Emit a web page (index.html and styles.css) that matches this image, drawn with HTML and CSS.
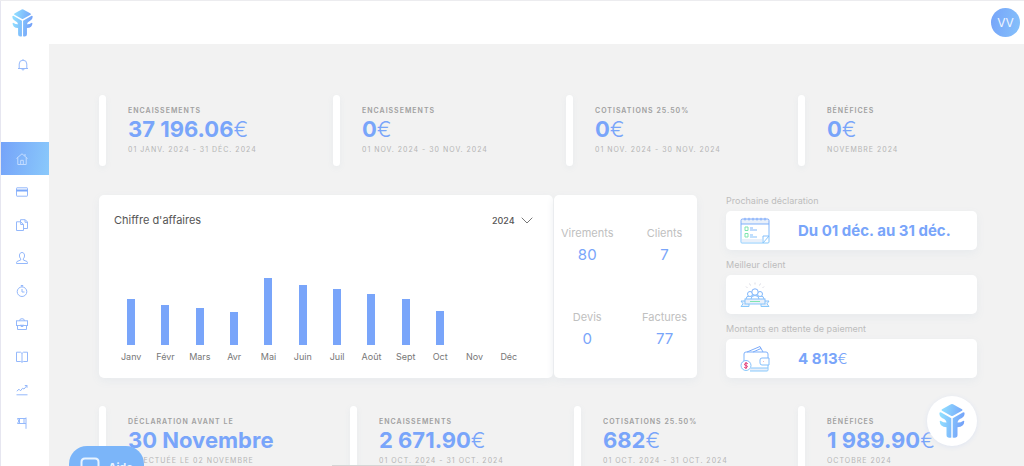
FILE: index.html
```html
<!DOCTYPE html>
<html lang="fr">
<head>
<meta charset="utf-8">
<meta name="viewport" content="width=device-width, initial-scale=1">
<title>Tableau de bord</title>
<link rel="stylesheet" href="styles.css">
</head>
<body>
<svg class="defs" width="0" height="0" aria-hidden="true">
  <defs>
    <linearGradient id="brand" gradientUnits="userSpaceOnUse" x1="2" y1="14" x2="24" y2="18"><stop offset="0" stop-color="#8fdcff"/><stop offset="1" stop-color="#75a3f9"/></linearGradient>
    <linearGradient id="line" gradientUnits="userSpaceOnUse" x1="0" y1="0" x2="0" y2="28"><stop offset="0" stop-color="#79a6fa"/><stop offset="1" stop-color="#8accfc"/></linearGradient>
    <symbol id="logo" viewBox="0 0 26 34">
      <g fill="url(#brand)">
        <path d="M12 .3Q13 -.2 14 .3L23 5.200Q24 6 23 6.700L14 11.700Q13 12.200 12 11.700L3 6.700Q2 6 3 5.200Z"/>
        <path d="M.5 8.700Q1 7.800 2.200 8.400L12.300 14.200V33.500Q7.500 34.500 7.500 31V23.300Q.8 22.800 .7 17.200Q.9 16.300 2 16.900Q4.500 18.700 7.500 18.500Q7.200 15.700 3.500 14.200Q0 12.500 .5 8.700Z"/>
        <path d="M25.500 8.700Q25 7.800 23.800 8.400L13.700 14.200V33.500Q18.500 34.500 18.500 31V23.300Q25.200 22.800 25.300 17.200Q25.100 16.300 24 16.900Q21.500 18.700 18.500 18.500Q18.800 15.700 22.500 14.200Q26 12.500 25.500 8.700Z"/>
      </g>
    </symbol>
  </defs>
</svg>

<div class="app">
  <aside class="sidebar">
    <a class="brand" href="#" aria-label="Accueil"><svg class="logo"><use href="#logo"/></svg></a>
    <button class="bell" type="button" aria-label="Notifications">
      <svg class="icon" viewBox="0 0 12 12"><path d="M1 9.500H11M2.200 9.500V5A3.800 3.800 0 0 1 9.800 5V9.500M4.800 9.800A1.200 1.200 0 0 0 7.200 9.800M6 .3V1.200"/></svg>
    </button>
    <nav class="nav" aria-label="Navigation principale">
      <a class="nav-item active" href="#" aria-label="Tableau de bord"><svg class="icon" viewBox="0 0 12 12"><path d="M.5 5.500 6 .8 11.500 5.500M1.800 4.600V11.500H10.200V4.600M4.700 11.300V7.300H7.300V11.300M9 1V3"/></svg></a>
      <a class="nav-item" href="#" aria-label="Paiements"><svg class="icon" viewBox="0 0 12 12"><rect x=".5" y="1.800" width="11" height="8.400" rx=".5"/><path class="thick" d="M.5 4.500H11.500"/></svg></a>
      <a class="nav-item" href="#" aria-label="Documents"><svg class="icon" viewBox="0 0 12 12"><path d="M4.500 3V.7H9.300L11.500 3V9.500H8M9 1V3.300H11.300M.5 2.800H4.700L7.500 5.300V11.500H.5ZM4.700 3V5.500H7.300"/></svg></a>
      <a class="nav-item" href="#" aria-label="Clients"><svg class="icon" viewBox="0 0 12 12"><path d="M4.700 6.800C2.800 5 3 .5 6 .5S9.200 5 7.300 6.800V8L11 9.500Q11.500 10 11.500 11.500H.5Q.5 10 1 9.500L4.700 8Z"/></svg></a>
      <a class="nav-item" href="#" aria-label="Temps"><svg class="icon" viewBox="0 0 12 12"><circle cx="6" cy="6.700" r="4.800"/><path d="M6 4V7H8.500M4.800.5H7.200M6 .5V2"/></svg></a>
      <a class="nav-item" href="#" aria-label="Services"><svg class="icon" viewBox="0 0 12 12"><rect x=".5" y="2.800" width="11" height="4.700"/><path d="M1.500 7.500V11.500H10.500V7.500M3.500 2.800Q3.500.7 6 .7T8.500 2.800M5 6.500V8.500H7V6.500"/></svg></a>
      <a class="nav-item" href="#" aria-label="Livre"><svg class="icon" viewBox="0 0 12 12"><path d="M6 2.500 4.500 1.200H.5V10.500H4.700L6 11.300 7.300 10.500H11.500V1.200H7.500ZM6 2.500V11"/></svg></a>
      <a class="nav-item" href="#" aria-label="Statistiques"><svg class="icon" viewBox="0 0 12 12"><path d="M.5 10.800H11.500M.8 7.200 3 5.200 4.500 6.800 6.500 4.300 8 5 11 1.500M8.800 1.500H11V3.800"/></svg></a>
      <a class="nav-item" href="#" aria-label="Objectifs"><svg class="icon" viewBox="0 0 12 12"><path d="M10 .5V11.800M10 1.500H1.500L2.800 4 1.500 6.500H10M3.500 1.500V6.500M8 1.500V6.500"/></svg></a>
    </nav>
  </aside>

  <header class="topbar"><button class="avatar" type="button">VV</button></header>

  <main class="content">
    <section class="stats current">
      <article class="stat"><h2>Encaissements</h2><strong>37 196.06<span>€</span></strong><p>01 janv. 2024 - 31 déc. 2024</p></article>
      <article class="stat"><h2>Encaissements</h2><strong>0<span>€</span></strong><p>01 nov. 2024 - 30 nov. 2024</p></article>
      <article class="stat"><h2>Cotisations 25.50%</h2><strong>0<span>€</span></strong><p>01 nov. 2024 - 30 nov. 2024</p></article>
      <article class="stat"><h2>Bénéfices</h2><strong>0<span>€</span></strong><p>Novembre 2024</p></article>
    </section>

    <div class="overview">
      <div class="panels">
        <section class="card revenue">
          <div class="revenue-head">
            <label for="year">Chiffre d'affaires</label>
            <div class="year">
              <select id="year"><option>2024</option></select>
              <svg class="chevron" viewBox="0 0 12 7"><path d="M.7.7 6 6 11.300.7"/></svg>
            </div>
          </div>
          <div class="chart">
            <div class="month"><i style="height:46px"></i><span>Janv</span></div>
            <div class="month"><i style="height:40px"></i><span>Févr</span></div>
            <div class="month"><i style="height:37px"></i><span>Mars</span></div>
            <div class="month"><i style="height:33px"></i><span>Avr</span></div>
            <div class="month"><i style="height:67px"></i><span>Mai</span></div>
            <div class="month"><i style="height:60px"></i><span>Juin</span></div>
            <div class="month"><i style="height:56px"></i><span>Juil</span></div>
            <div class="month"><i style="height:51px"></i><span>Août</span></div>
            <div class="month"><i style="height:46px"></i><span>Sept</span></div>
            <div class="month"><i style="height:34px"></i><span>Oct</span></div>
            <div class="month"><i style="height:0px"></i><span>Nov</span></div>
            <div class="month"><i style="height:0px"></i><span>Déc</span></div>
          </div>
        </section>
        <dl class="card counts">
          <div><dt>Virements</dt><dd>80</dd></div>
          <div><dt>Clients</dt><dd>7</dd></div>
          <div><dt>Devis</dt><dd>0</dd></div>
          <div><dt>Factures</dt><dd>77</dd></div>
        </dl>
      </div>

      <div class="facts">
        <section class="fact"><h3>Prochaine déclaration</h3>
          <div class="card fact-card">
            <svg class="picture" viewBox="0 0 30 28"><rect class="tint" x="1" y="2" width="28" height="5"/><path class="tint" d="M2 22H22V25H2Z"/><path class="outline" d="M2.500 2H27.500Q29 2 29 3.500V19L23 26H1.800Q1 26 1 25V3.500Q1 2 2.500 2ZM1 7H29M23 26V19H29M23 26H28Q29 26 29 25V19M5 .8V3.500M9 .8V3.500M13 .8V3.500M17 .8V3.500M21 .8V3.500M25 .8V3.500M10 11H13M10 13H17M10 18H13M10 20H17"/><path class="green" d="M5 10H8V13.500H5ZM5 16.500H8V20H5Z"/></svg>
            <b>Du 01 déc. au 31 déc.</b>
          </div>
        </section>
        <section class="fact"><h3>Meilleur client</h3>
          <div class="card fact-card">
            <svg class="picture" viewBox="0 0 30 28"><path class="spark" d="M15 1.500V3.500M9.500 2.500 10.500 4.500M20.500 2.500 19.500 4.500M6 5.500 7.500 7M24 5.500 22.500 7"/><path class="outline tint" d="M5 20H1L3 22.800 1 25.500H9V23M25 20H29L27 22.800 29 25.500H21V23"/><path class="outline fill" d="M6 18Q6 15 9.500 15H20.500Q24 15 24 18"/><circle class="outline fill" cx="10" cy="13" r="2.500"/><circle class="outline fill" cx="20" cy="13" r="2.500"/><path class="outline fill" d="M11 18Q11 14.500 15 14.500T19 18"/><circle class="outline fill" cx="15" cy="11" r="3.200"/><rect class="outline tint" x="5" y="18" width="20" height="5"/><path class="green" d="M10 20.500H20"/></svg>
          </div>
        </section>
        <section class="fact"><h3>Montants en attente de paiement</h3>
          <div class="card fact-card">
            <svg class="picture" viewBox="0 0 30 28"><path class="tint" d="M10 23H27V26H10Z"/><path class="outline" d="M4 16V9Q4 7 6 7H26Q28 7 28 9V25Q28 26 27 26H10M7 7 20 1.500 23 7M13 7 21 3.500M11 23H28"/><path class="outline fill" d="M29 13H22Q20 13 20 15V18Q20 20 22 20H29Z"/><circle class="outline fill" cx="6" cy="20.500" r="5"/><path class="red" d="M7.800 18.700Q6 17.300 4.800 18.700T6 20.500 7 22.300 4.200 22.300M6 17V24"/><path class="pinkdot" d="M23 16.500H24"/></svg>
            <b>4 813<span>€</span></b>
          </div>
        </section>
      </div>
    </div>

    <section class="stats previous">
      <article class="stat"><h2>Déclaration avant le</h2><strong>30 Novembre</strong><p>Effectuée le 02 novembre</p></article>
      <article class="stat"><h2>Encaissements</h2><strong>2 671.90<span>€</span></strong><p>01 oct. 2024 - 31 oct. 2024</p></article>
      <article class="stat"><h2>Cotisations 25.50%</h2><strong>682<span>€</span></strong><p>01 oct. 2024 - 31 oct. 2024</p></article>
      <article class="stat"><h2>Bénéfices</h2><strong>1 989.90<span>€</span></strong><p>Octobre 2024</p></article>
    </section>
  </main>
</div>

<button class="help" type="button"><svg viewBox="0 0 20 20"><path d="M5 1.500H15Q18.500 1.500 18.500 5V12Q18.500 15 15 15H9L5 18.500V15Q1.500 15 1.500 12V5Q1.500 1.500 5 1.500Z"/></svg>Aide</button>
<button class="assistant" type="button" aria-label="Assistant"><svg class="logo"><use href="#logo"/></svg></button>
<div class="drawer-edge"></div>
</body>
</html>
```
FILE: styles.css
```css
* { box-sizing: border-box; }

body {
  margin: 0;
  height: 100vh;
  overflow: hidden;
  background: #f2f2f2;
  color: #555;
  font-family: Inter, "Liberation Sans", sans-serif;
}

button { border: 0; padding: 0; font: inherit; background: none; }
h2, h3, p, dl, dd { margin: 0; }
.defs { position: absolute; }

.app {
  display: grid;
  grid-template-columns: 49px 1fr;
  grid-template-rows: 43px auto;
  height: 100vh;
  border-top: 1px solid #ececef;
}

.sidebar {
  grid-row: 1 / 3;
  display: flex;
  flex-direction: column;
  background: #fff;
  border-left: 1px solid #e6e6f0;
}
.brand { display: flex; justify-content: center; padding: 8px 6px 0 0; }
.logo { width: 21px; height: 28px; }
.bell { display: flex; justify-content: center; padding: 22px 5px 0 0; margin-bottom: 71px; }
.icon { width: 12px; height: 12px; fill: none; stroke: #94b8fb; stroke-width: 1; }
.icon .thick { stroke-width: 2; stroke: #7ba8fa; }
.nav { display: flex; flex-direction: column; }
.nav-item { height: 33px; display: flex; align-items: center; justify-content: center; padding-right: 6px; }
.nav-item.active { background: linear-gradient(100deg, #75a3f9, #8ac9fb); }
.active .icon { stroke: #c3dcff; }

.topbar { display: flex; justify-content: flex-end; align-items: center; padding-right: 4px; background: #fff; }
.avatar {
  width: 29px;
  height: 29px;
  border-radius: 50%;
  background: linear-gradient(100deg, #76a4f9, #85c1fb);
  color: #eef5ff;
  font-size: 12px;
}

.content { padding: 51px 47px 0 50px; }

.stats { display: grid; }
.current { grid-template-columns: 234fr 233fr 232fr 179fr; }
.previous { grid-template-columns: 251fr 224fr 224fr 179fr; margin-top: 28px; }
.stat {
  position: relative;
  min-width: 0;
  height: 71px;
  padding: 11px 0 0 29px;
  white-space: nowrap;
}
.stat::before {
  content: "";
  position: absolute;
  inset: 0 auto 0 0;
  width: 7px;
  border-radius: 4px;
  background: #fff;
  box-shadow: 0 2px 6px #e7eaed;
}
.stat h2, .stat p { font-size: 7px; line-height: 10px; letter-spacing: 1px; text-transform: uppercase; }
.stat h2 { color: #a0a0a0; font-weight: 600; }
.stat strong { display: block; color: #79a5fa; font-size: 22px; line-height: 26px; font-weight: 700; }
.stat strong span, .fact-card span { font-weight: 300; }
.stat p { color: #b5b5b5; margin-top: 3px; }

.card { background: #fff; border-radius: 5px; box-shadow: 0 3px 8px #e7eaed; }
.overview { display: grid; grid-template-columns: 598fr 251fr; gap: 29px; margin-top: 29px; }
.panels { display: grid; grid-template-columns: 454fr 143fr; gap: 1px; }
.revenue { display: flex; flex-direction: column; justify-content: space-between; padding: 15px 20px 15px 15px; }
.revenue-head { display: flex; align-items: center; justify-content: space-between; line-height: 20px; font-size: 11px; }
.year { display: flex; align-items: center; gap: 6px; }
.year select { appearance: none; border: 0; padding: 0; background: none; font: 500 9px Inter, sans-serif; color: #555; }
.chevron { width: 12px; height: 7px; fill: none; stroke: #777; stroke-width: 1; }
.chart { display: grid; grid-template-columns: repeat(12, 1fr); align-items: end; margin-right: 7px; }
.month { display: flex; flex-direction: column; align-items: center; gap: 6px; font-size: 9px; line-height: 12px; color: #777; }
.month i { width: 8px; background: #79a5fa; }

.counts {
  display: grid;
  grid-template-columns: auto auto;
  grid-template-rows: 84px 1fr;
  justify-content: space-between;
  padding: 29px 10px 0 7px;
  text-align: center;
}
.counts dt { color: #c0c0c0; font-size: 11px; line-height: 18px; }
.counts dd { color: #79a5fa; font-size: 15px; line-height: 26px; }

.facts { display: grid; gap: 9px; }
.fact h3 { color: #bdbdbd; font-size: 9px; font-weight: 400; line-height: 12px; margin-bottom: 4px; }
.fact-card { display: flex; align-items: center; gap: 28px; height: 39px; padding-left: 14px; color: #79a5fa; font-size: 15px; }
.picture { width: 30px; height: 28px; fill: none; stroke-width: 1; }
.picture .outline { stroke: url(#line); }
.picture .tint { fill: #e9f0fa; }
.picture .fill { fill: #fff; }
.picture .green { stroke: #7fe5b0; }
.picture .spark { stroke: #dcdce5; }
.picture .red { stroke: #e33d78; }
.picture .pinkdot { stroke: #f2bfc9; }

.help {
  position: fixed;
  left: 69px;
  bottom: -22px;
  width: 75px;
  height: 42px;
  border-radius: 18px;
  display: flex;
  align-items: center;
  justify-content: center;
  gap: 8px;
  background: #7bb5f9;
  color: #e8f3ff;
  font-size: 11px;
  font-weight: 700;
}
.help svg { width: 20px; height: 20px; fill: none; stroke: #e8f3ff; stroke-width: 2; }
.assistant {
  position: fixed;
  right: 47px;
  bottom: 20px;
  width: 50px;
  height: 50px;
  display: grid;
  place-items: center;
  border-radius: 50%;
  background: #fff;
  box-shadow: 0 1px 5px #dfe5f2;
}
.assistant .logo { width: 26px; height: 34px; }
.drawer-edge { position: fixed; left: 332px; bottom: 0; width: 94px; height: 1px; background: #d5d5d5; }
```
